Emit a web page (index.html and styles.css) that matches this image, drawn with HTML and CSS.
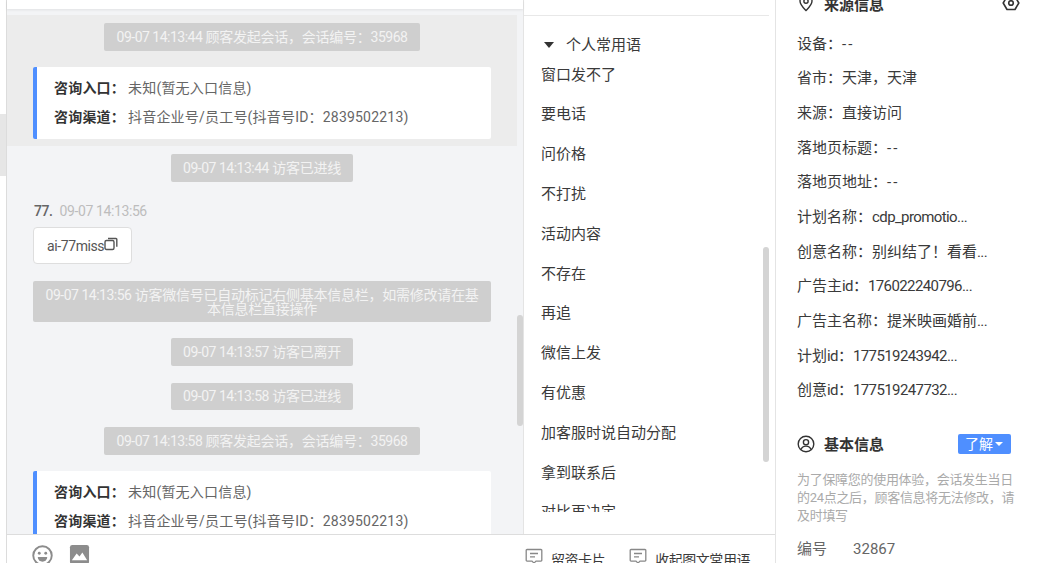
FILE: index.html
```html
<!DOCTYPE html>
<html lang="zh">
<head>
<meta charset="utf-8">
<title>会话</title>
<link rel="stylesheet" href="styles.css">
</head>
<body>
<div class="app">
  <div class="rail"><div class="rail-block"></div></div>
  <div class="center">
    <div class="workspace">
      <section class="chat">
        <div class="chat-top"></div>
        <div class="chat-scroll">
          <div class="messages">
            <div class="highlight">
              <div class="notice"><span class="num">09-07 14:13:44</span> 顾客发起会话，会话编号：<span class="num">35968</span></div>
              <div class="entry">
                <p><b>咨询入口：</b>未知(暂无入口信息)</p>
                <p><b>咨询渠道：</b>抖音企业号/员工号(抖音号ID：2839502213)</p>
              </div>
            </div>
            <div class="notice n-after"><span class="num">09-07 14:13:44</span> 访客已进线</div>
            <div class="meta"><b>77.</b><span>09-07 14:13:56</span></div>
            <div class="bubble">ai-77miss<svg class="copy" viewBox="0 0 14 14" width="14" height="14"><rect x="1" y="3.500" width="9" height="9" rx="1.500" fill="none" stroke="#555" stroke-width="1.400"/><path d="M4 1.500h8a.8.8 0 0 1 .8.8v7.500" fill="none" stroke="#555" stroke-width="1.400"/></svg></div>
            <div class="notice wide"><span class="num">09-07 14:13:56</span> 访客微信号已自动标记右侧基本信息栏，如需修改请在基本信息栏直接操作</div>
            <div class="notice gap-16"><span class="num">09-07 14:13:57</span> 访客已离开</div>
            <div class="notice gap-17 short"><span class="num">09-07 14:13:58</span> 访客已进线</div>
            <div class="notice gap-17"><span class="num">09-07 14:13:58</span> 顾客发起会话，会话编号：<span class="num">35968</span></div>
            <div class="entry">
              <p><b>咨询入口：</b>未知(暂无入口信息)</p>
              <p><b>咨询渠道：</b>抖音企业号/员工号(抖音号ID：2839502213)</p>
            </div>
          </div>
          <div class="scrollbar chat-bar"></div>
        </div>
      </section>
      <aside class="phrases">
        <div class="phrases-top"></div>
        <div class="phrases-body">
          <div class="phrases-list">
            <div class="phrases-title"><i class="caret"></i>个人常用语</div>
            <ul>
              <li>窗口发不了</li>
              <li>要电话</li>
              <li>问价格</li>
              <li>不打扰</li>
              <li>活动内容</li>
              <li>不存在</li>
              <li>再追</li>
              <li>微信上发</li>
              <li>有优惠</li>
              <li>加客服时说自动分配</li>
              <li>拿到联系后</li>
              <li>对比再决定</li>
            </ul>
          </div>
          <div class="scrollbar phrase-bar"></div>
        </div>
      </aside>
    </div>
    <footer class="toolbar">
      <div class="tools">
        <svg class="emoji" viewBox="0 0 22 22" width="21" height="21"><circle cx="11" cy="11" r="9.700" fill="none" stroke="#8c8c8c" stroke-width="2"/><circle cx="7.600" cy="8.600" r="1.500" fill="#8c8c8c"/><circle cx="14.400" cy="8.600" r="1.500" fill="#8c8c8c"/><path d="M6 12.500h10a5 5 0 0 1-10 0z" fill="#8c8c8c"/></svg>
        <svg viewBox="0 0 22 22" width="21" height="21"><rect x="1" y="1" width="20" height="20" rx="2.500" fill="#8c8c8c"/><path d="M3 17l5-7 3 3 3-4 5 8z" fill="#fff"/></svg>
      </div>
      <div class="actions">
        <span class="action"><svg viewBox="0 0 18 18" width="18" height="18"><path d="M2 2.500h14a.8.8 0 0 1 .8.8v10a.8.8 0 0 1-.8.8h-5l-2 2-2-2H2a.8.8 0 0 1-.8-.8v-10a.8.8 0 0 1 .8-.8z" fill="none" stroke="#888" stroke-width="1.300"/><path d="M5 6.500h8M5 9.800h5" stroke="#888" stroke-width="1.300"/></svg>留资卡片</span>
        <span class="action"><svg viewBox="0 0 18 18" width="18" height="18"><path d="M2 2.500h14a.8.8 0 0 1 .8.8v10a.8.8 0 0 1-.8.8h-5l-2 2-2-2H2a.8.8 0 0 1-.8-.8v-10a.8.8 0 0 1 .8-.8z" fill="none" stroke="#888" stroke-width="1.300"/><path d="M5 6.500h8M5 9.800h5" stroke="#888" stroke-width="1.300"/></svg>收起图文常用语</span>
      </div>
    </footer>
  </div>
  <aside class="info">
    <div class="info-head source">
      <svg viewBox="0 0 18 18" width="18" height="18"><path d="M9 1.200c-3.500 0-6 2.600-6 5.900 0 3.800 3.600 7 6 9.500 2.400-2.500 6-5.700 6-9.500 0-3.300-2.500-5.900-6-5.900z" fill="none" stroke="#333" stroke-width="1.400"/><circle cx="9" cy="7.200" r="2.100" fill="none" stroke="#333" stroke-width="1.400"/></svg>
      <b>来源信息</b>
      <svg class="head-end" viewBox="0 0 18 18" width="18" height="18"><path d="M1.200 9L5 2.500h8L16.800 9 13 15.500H5z" fill="none" stroke="#333" stroke-width="1.600" stroke-linejoin="round"/><circle cx="9" cy="9" r="2.300" fill="none" stroke="#333" stroke-width="1.600"/></svg>
    </div>
    <ul class="fields">
      <li>设备：<span class="dash">--</span></li>
      <li>省市：天津，天津</li>
      <li>来源：直接访问</li>
      <li>落地页标题：<span class="dash">--</span></li>
      <li>落地页地址：<span class="dash">--</span></li>
      <li>计划名称：<span class="val">cdp_promotio...</span></li>
      <li>创意名称：别纠结了！看看<span class="val">...</span></li>
      <li>广告主<span class="val">id</span>：<span class="val">176022240796...</span></li>
      <li>广告主名称：提米映画婚前<span class="val">...</span></li>
      <li>计划<span class="val">id</span>：<span class="val">177519243942...</span></li>
      <li>创意<span class="val">id</span>：<span class="val">177519247732...</span></li>
    </ul>
    <div class="info-head basic">
      <svg viewBox="0 0 18 18" width="18" height="18"><circle cx="9" cy="9" r="7.800" fill="none" stroke="#333" stroke-width="1.400"/><circle cx="9" cy="7.200" r="2.600" fill="none" stroke="#333" stroke-width="1.400"/><path d="M4 14.500c.8-2.400 2.700-3.400 5-3.400s4.200 1 5 3.400" fill="none" stroke="#333" stroke-width="1.400"/></svg>
      <b>基本信息</b>
      <span class="learn">了解<i></i></span>
    </div>
    <p class="hint">为了保障您的使用体验，会话发生当日的24点之后，顾客信息将无法修改，请及时填写</p>
    <div class="code"><span>编号</span><span>32867</span></div>
  </aside>
</div>
</body>
</html>
```
FILE: styles.css
```css
* { box-sizing: border-box; }
html, body { margin: 0; padding: 0; }
body {
  width: 1037px;
  height: 563px;
  overflow: hidden;
  background: #fff;
  font-family: Roboto, "Noto Sans CJK SC", sans-serif;
  font-size: 14px;
  color: #333;
}
p, ul { margin: 0; padding: 0; list-style: none; }
.app { display: flex; height: 563px; }
.rail { width: 7px; flex: none; border-right: 1px solid #dcdcdc; padding-top: 114px; }
.rail-block { height: 62px; background: #e6e6e6; }
.center { width: 769px; flex: none; display: flex; flex-direction: column; border-right: 1px solid #e4e4e4; }
.workspace { display: flex; height: 534px; flex: none; }
.chat { width: 516px; flex: none; display: flex; flex-direction: column; }
.chat-top { height: 9px; flex: none; background: #fff; box-shadow: 0 1px 3px rgba(0,0,0,.08); position: relative; }
.chat-scroll { flex: 1; min-height: 0; background: #f3f4f6; display: flex; overflow: hidden; }
.messages { width: 510px; flex: none; padding-top: 6px; }
.highlight { background: #ececec; height: 131px; padding-top: 8px; }
.notice {
  width: fit-content;
  margin: 0 auto;
  min-height: 28px;
  padding: 5px 12.500px;
  border-radius: 2px;
  background: #cfcfcf;
  color: #f3f3f3;
  font-size: 14px;
  letter-spacing: -.25px;
  line-height: 18px;
  text-align: center;
}
.num { letter-spacing: -.5px; }
.n-after { margin-top: 8px; }
.meta { margin: 20px 0 0 27px; line-height: 18px; font-size: 14px; color: #bdbdbd; display: flex; gap: 7px; letter-spacing: -.4px; }
.meta b { color: #666; font-weight: 500; }
.bubble {
  margin: 7px 0 0 26px;
  width: 99px;
  height: 37px;
  border: 1px solid #dedede;
  border-radius: 4px;
  background: #fff;
  color: #555;
  letter-spacing: -.4px;
  line-height: 36px;
  padding-left: 13px;
  display: flex;
  align-items: center;
}
.copy { flex: none; margin-top: -3px; }
.wide { width: 458px; margin: 17px 0 0 26px; padding: 7px 11px 0; min-height: 41px; line-height: 14px; }
.gap-16 { margin-top: 16px; }
.gap-17 { margin-top: 17px; }
.short { min-height: 27px; padding-top: 4px; }
.entry {
  width: 458px;
  margin: 16px 0 0 26px;
  background: #fff;
  border-left: 4px solid #4f8fff;
  border-radius: 2px;
  padding: 7px 0 7px 17px;
  color: #666;
  line-height: 29px;
}
.entry p { letter-spacing: .2px; }
.entry b { color: #333; font-weight: 700; margin-right: 3px; }
.scrollbar { background: #d4d4d4; border-radius: 3px; width: 6px; flex: none; }
.chat-bar { margin-top: 306px; height: 111px; }
.phrases { width: 252px; flex: none; display: flex; flex-direction: column; border-left: 1px solid #e4e4e4; }
.phrases-top { height: 16px; flex: none; border-bottom: 1px solid #e8e8e8; margin-right: 6px; }
.phrases-body { flex: 1; min-height: 0; display: flex; justify-content: space-between; overflow: hidden; }
.phrases-list { width: 239px; height: 496px; overflow: hidden; padding: 19px 0 0 17px; flex: none; font-size: 15px; color: #3a3a3a; }
.phrases-title { line-height: 20px; display: flex; align-items: center; padding-left: 3px; margin-bottom: 9.600px; }
.caret { width: 0; height: 0; border: 5.500px solid transparent; border-top: 6px solid #333; border-bottom: 0; margin-right: 12px; }
.phrases-list li { height: 39.800px; line-height: 20px; }
.phrase-bar { margin: 231px 6px 0 0; height: 215px; }
.toolbar { height: 29px; flex: none; border-top: 1px solid #ddd; display: flex; justify-content: space-between; overflow: hidden; padding: 9px 25px 0 25px; }
.tools { display: flex; gap: 16px; }
.emoji { margin-top: 1px; }
.actions { display: flex; gap: 24px; color: #3a3a3a; margin-top: 2px; letter-spacing: -.45px; }
.action { display: flex; gap: 8px; line-height: 28px; white-space: nowrap; }
.action svg { margin-top: 1px; }
.info { width: 261px; flex: none; padding: 0 26px 0 21px; overflow: hidden; font-size: 15px; }
.info-head { display: flex; align-items: center; gap: 9px; height: 20px; color: #333; }
.info-head b { font-weight: 700; }
.source { margin-top: -7px; }
.head-end { margin: 0 -9px 0 auto; }
.fields { margin-top: 20.500px; }
.fields li { height: 34.700px; line-height: 20px; color: #3a3a3a; white-space: nowrap; }
.val { letter-spacing: -.6px; }
.dash { letter-spacing: 2px; }
.basic { margin-top: 18.800px; }
.learn { margin-left: auto; width: 53px; height: 20px; border-radius: 2px; background: #4f8fff; color: #fff; font-size: 14px; line-height: 20px; padding-left: 7px; display: flex; align-items: center; gap: 2px; }
.learn i { width: 0; height: 0; border: 4px solid transparent; border-top: 4px solid #fff; border-bottom: 0; }
.hint { margin: 17px -6px 0 0; color: #aaa; font-size: 13px; letter-spacing: -.3px; line-height: 18px; }
.code { margin-top: 14px; display: flex; gap: 26px; color: #666; line-height: 20px; }
```
